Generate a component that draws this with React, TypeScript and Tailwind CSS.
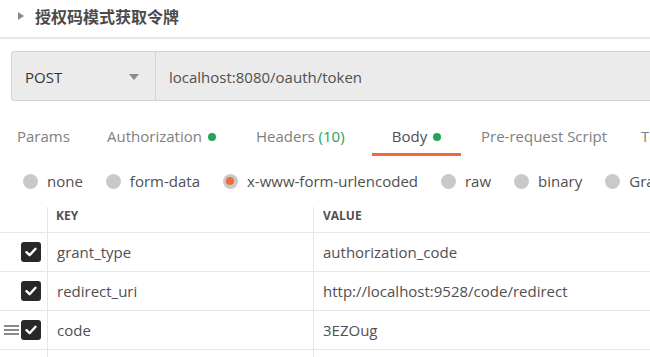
import React from "react";

const font = { fontFamily: '"Open Sans", "Noto Sans CJK SC", sans-serif' };

function Dot() {
  return <span className="inline-block w-[8px] h-[8px] rounded-full bg-[#24a35a] ml-[6px]" />;
}

function Radio({ label, active }: { label: string; active?: boolean }) {
  return (
    <div className="flex items-center gap-[9px] shrink-0">
      <span className="w-[15px] h-[15px] rounded-full bg-[#c9c9c9] flex items-center justify-center">
        {active && <span className="w-[8px] h-[8px] rounded-full bg-[#f26b3a]" />}
      </span>
      <span>{label}</span>
    </div>
  );
}

function Check() {
  return (
    <span className="w-[20px] h-[20px] rounded-[3px] bg-[#282828] flex items-center justify-center">
      <svg width="12" height="10" viewBox="0 0 12 10">
        <path d="M1.5 5.2 L4.6 8.2 L10.5 1.8" stroke="#fff" strokeWidth="2.4" fill="none" strokeLinecap="round" strokeLinejoin="round" />
      </svg>
    </span>
  );
}

const rows = [
  { key: "grant_type", value: "authorization_code" },
  { key: "redirect_uri", value: "http://localhost:9528/code/redirect" },
  { key: "code", value: "3EZOug", handle: true },
];

export default function App() {
  return (
    <div className="w-[650px] h-[357px] overflow-hidden bg-white text-[#505050]" style={font}>
      <div className="h-[39px] flex items-center pl-[17px] border-b-2 border-[#e6e6e6]">
        <svg width="8" height="10" viewBox="0 0 8 10" className="mr-[10px] mt-[-5px]">
          <path d="M1 1 L7 5 L1 9 Z" fill="#8a8a8a" />
        </svg>
        <span className="text-[16px] font-semibold text-[#4a4a4a] mt-[-4px]">授权码模式获取令牌</span>
      </div>

      <div className="mt-[12px] ml-[11px] w-[700px] h-[50px] flex bg-[#ebebeb] border border-[#d4d4d4] rounded-l-[3px] text-[15px]">
        <div className="w-[144px] flex items-center justify-between pl-[13px] pr-[16px] pt-[2px] border-r border-[#d4d4d4]">
          <span className="text-[#333]">POST</span>
          <svg width="10" height="6" viewBox="0 0 10 6">
            <path d="M0 0 L10 0 L5 6 Z" fill="#8a8a8a" />
          </svg>
        </div>
        <div className="flex items-center pl-[13px] pt-[2px] text-[#505050]">localhost:8080/oauth/token</div>
      </div>

      <div className="flex h-[39px] mt-[16px] text-[15px] text-[#808080] whitespace-nowrap">
        <div className="pl-[17px] w-[107px] shrink-0 flex items-center">Params</div>
        <div className="w-[149px] shrink-0 flex items-center">Authorization<Dot /></div>
        <div className="w-[116px] shrink-0 flex items-center">Headers&nbsp;<span className="text-[#24a35a]">(10)</span></div>
        <div className="w-[89px] shrink-0 flex items-center justify-center border-b-[3px] border-[#ef6c3a] pt-[3px] text-[#505050]">Body<Dot /></div>
        <div className="ml-[20px] w-[160px] shrink-0 flex items-center">Pre-request Script</div>
        <div className="flex items-center">Tests</div>
      </div>

      <div className="flex items-center h-[26px] mt-[12px] pl-[23px] gap-[23px] text-[15px] text-[#505050] whitespace-nowrap">
        <Radio label="none" />
        <Radio label="form-data" />
        <Radio label="x-www-form-urlencoded" active />
        <Radio label="raw" />
        <Radio label="binary" />
        <Radio label="GraphQL" />
      </div>

      <div className="mt-[6px] text-[15px]">
        <div className="grid grid-cols-[48px_266px_1fr] h-[33px] border-b border-[#e6e6e6]">
          <div className="border-r border-[#e6e6e6] mt-[7px]" />
          <div className="border-r border-[#e6e6e6] mt-[7px] pl-[8px] text-[12px] font-bold text-[#505050]">KEY</div>
          <div className="pl-[9px] text-[12px] font-bold text-[#505050] mt-[7px]">VALUE</div>
        </div>
        {rows.map((r) => (
          <div key={r.key} className="grid grid-cols-[48px_266px_1fr] h-[39px] border-b border-[#e6e6e6]">
            <div className="border-r border-[#e6e6e6] flex items-center justify-end pr-[6px] gap-[2px]">
              {r.handle && (
                <svg width="15" height="12" viewBox="0 0 15 12">
                  <rect x="0" y="1" width="15" height="2" fill="#8a8a8a" />
                  <rect x="0" y="5" width="15" height="2" fill="#8a8a8a" />
                  <rect x="0" y="9" width="15" height="2" fill="#8a8a8a" />
                </svg>
              )}
              <Check />
            </div>
            <div className="border-r border-[#e6e6e6] flex items-center pl-[9px]">{r.key}</div>
            <div className="flex items-center pl-[9px]">{r.value}</div>
          </div>
        ))}
        <div className="grid grid-cols-[48px_266px_1fr] h-[39px]">
          <div className="border-r border-[#e6e6e6]" />
          <div className="border-r border-[#e6e6e6]" />
          <div />
        </div>
      </div>
    </div>
  );
}
